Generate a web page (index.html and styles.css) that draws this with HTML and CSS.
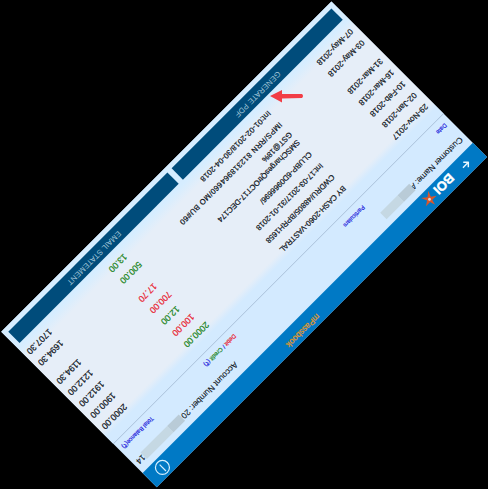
FILE: index.html
```
<!DOCTYPE html>
<html lang="en">
<head>
<meta charset="utf-8">
<title>mPassbook</title>
<link rel="stylesheet" href="styles.css">
</head>
<body>
<main class="screen">
  <header class="bar">
    <svg class="back" viewBox="0 0 10 10"><path d="M9.5 5H1M5 1L1 5L5 9"/></svg>
    <span class="brand">BOI</span>
    <svg class="star" viewBox="0 0 16 16"><path class="star-fill" d="M8 0L9.6 5.8L16 5.6L10.8 9.2L13.4 15.6L8 11.3L2.6 15.6L5.2 9.2L0 5.6L6.4 5.8Z"/><circle cx="8" cy="8.3" r="1.6"/></svg>
    <span class="title">mPassbook</span>
    <svg class="power" viewBox="0 0 16 16"><circle cx="8" cy="8" r="7"/><path d="M8 3V12"/></svg>
  </header>
  <section class="account">
    <span class="customer">Customer Name: A</span><i class="mask name-mask"></i>
    <span class="number">Account Number: 20</span><i class="mask number-mask"></i><span class="tail">14</span>
  </section>
  <section class="cols heads">
    <span>Date</span><span>Particulars</span>
    <span class="amt"><b class="debit">Debit</b> / <b class="credit">Credit</b> (₹)</span><span class="bal">Total Balance(₹)</span>
  </section>
  <section class="rows">
    <div class="cols row"><span class="date">29-Nov-2017</span><span class="part">BY CASH-2060-VASTRAL</span><span class="amt credit">2000.00</span><span class="bal">2000.00</span></div>
    <div class="cols row"><span class="date">02-Jan-2018</span><span class="part">CWDRU/48805/BPRH1658</span><span class="amt debit">100.00</span><span class="bal">1900.00</span></div>
    <div class="cols row"><span class="date">10-Feb-2018</span><span class="part">Int:17-03-2017/31-01-2018</span><span class="amt credit">12.00</span><span class="bal">1912.00</span></div>
    <div class="cols row"><span class="date">16-Mar-2018</span><span class="part">CLUBP-6D0966696/</span><span class="amt debit">700.00</span><span class="bal">1212.00</span></div>
    <div class="cols row tall"><span class="date">31-Mar-2018</span><span class="part">SMSChargesQtrOCT17-DEC174<br>GST@18%</span><span class="amt debit">17.70</span><span class="bal">1194.30</span></div>
    <div class="cols row"><span class="date">03-May-2018</span><span class="part wide">IMPS/RRN 812318964660/MO BU#60</span><span class="amt credit">500.00</span><span class="bal">1694.30</span></div>
    <div class="cols row"><span class="date">07-May-2018</span><span class="part spaced">Int:01-02-2018/30-04-2018</span><span class="amt credit">13.00</span><span class="bal">1707.30</span></div>
  </section>
  <footer class="actions"><span class="button">GENERATE PDF</span><span class="button">EMAIL STATEMENT</span></footer>
</main>
<svg class="pointer" viewBox="0 0 34 14"><path d="M0 7L12 1V5L32 5Q34 7 32 9L12 9.5V13.5Z"/></svg>
</body>
</html>
```
FILE: styles.css
```
* { box-sizing: border-box; }
html, body { margin: 0; width: 488px; height: 489px; overflow: hidden; background: #000; }
body { position: relative; font-family: "Liberation Sans", Arial, sans-serif; color: #0c1218; }
.screen {
  width: 467px; height: 220px; display: flex; flex-direction: column;
  background: #d3eaff; transform-origin: 0 0;
  transform: translate(487px, 157px) rotate(135deg);
}
.bar { height: 20px; flex: none; display: flex; align-items: center; background: #0079c5; color: #fff; }
.back { width: 9px; height: 9px; margin-left: 16px; margin-top: -2px; fill: none; stroke: #e8f7ff; stroke-width: 1.6; }
.brand { width: 25px; margin-left: 13px; margin-top: 3px; font-size: 13px; font-weight: bold; line-height: 13px; -webkit-text-stroke: .4px #fff; }
.star { width: 15px; height: 15px; fill: #d8d8d8; }
.star-fill { fill: #d9572b; }
.title { width: 44px; margin-left: 153px; margin-top: -6px; font-size: 8.4px; color: #e39a28; white-space: nowrap; -webkit-text-stroke: .25px; }
.power { width: 16px; height: 16px; margin-left: auto; margin-right: 10px; fill: none; stroke: #d5f0ff; stroke-width: 1.2; }
.account { height: 22px; flex: none; display: flex; align-items: center; padding-left: 5px; font-size: 8.4px; white-space: nowrap; -webkit-text-stroke: .1px; }
.customer { width: 69px; }
.mask { height: 9px; flex: none; }
.name-mask { width: 41px; background: linear-gradient(90deg, #b9cbd7 40%, #c5d8e3 40%); }
.number { width: 77px; margin-left: 208px; }
.number-mask { width: 54px; background: linear-gradient(90deg, #b9cbd7 30%, #c5d8e3 30%); }
.tail { width: 10px; }
.cols { display: grid; grid-template-columns: 116px 160px 65px 116px; padding-left: 6px; white-space: nowrap; -webkit-text-stroke: .2px; }
.heads { height: 20px; flex: none; align-items: center; border-bottom: 1.5px solid #a9bfd8; font-size: 5.9px; color: #2525dc; }
.heads b { font-weight: normal; }
.amt, .bal { text-align: right; }
.debit { color: #e8192c; }
.credit { color: #168216; }
.rows { height: 137px; flex: none; padding-top: 10px; background: linear-gradient(#d3eaff 0, #d3eaff 9px, #e6eef8 17px, #e6eef8 122px, #d6edff 134px); font-size: 8.8px; }
.row { height: 16px; line-height: 16px; }
.tall { height: 26px; }
.date { font-size: 8.1px; }
.part { font-size: 7.7px; }
.wide { letter-spacing: .35px; }
.spaced { letter-spacing: .2px; }
.tall .part { line-height: 11px; padding-top: 3px; }
.actions { flex: 1; display: flex; gap: 6px; padding: 0 5px 5px; background: #d6edff; }
.button { flex: 1; background: #004c7b; color: #9fc3d6; font-size: 7.8px; letter-spacing: .1px; line-height: 15px; text-align: center; }
.pointer { position: absolute; left: 270px; top: 89px; width: 34px; height: 14px; fill: #f23d46; }
```
